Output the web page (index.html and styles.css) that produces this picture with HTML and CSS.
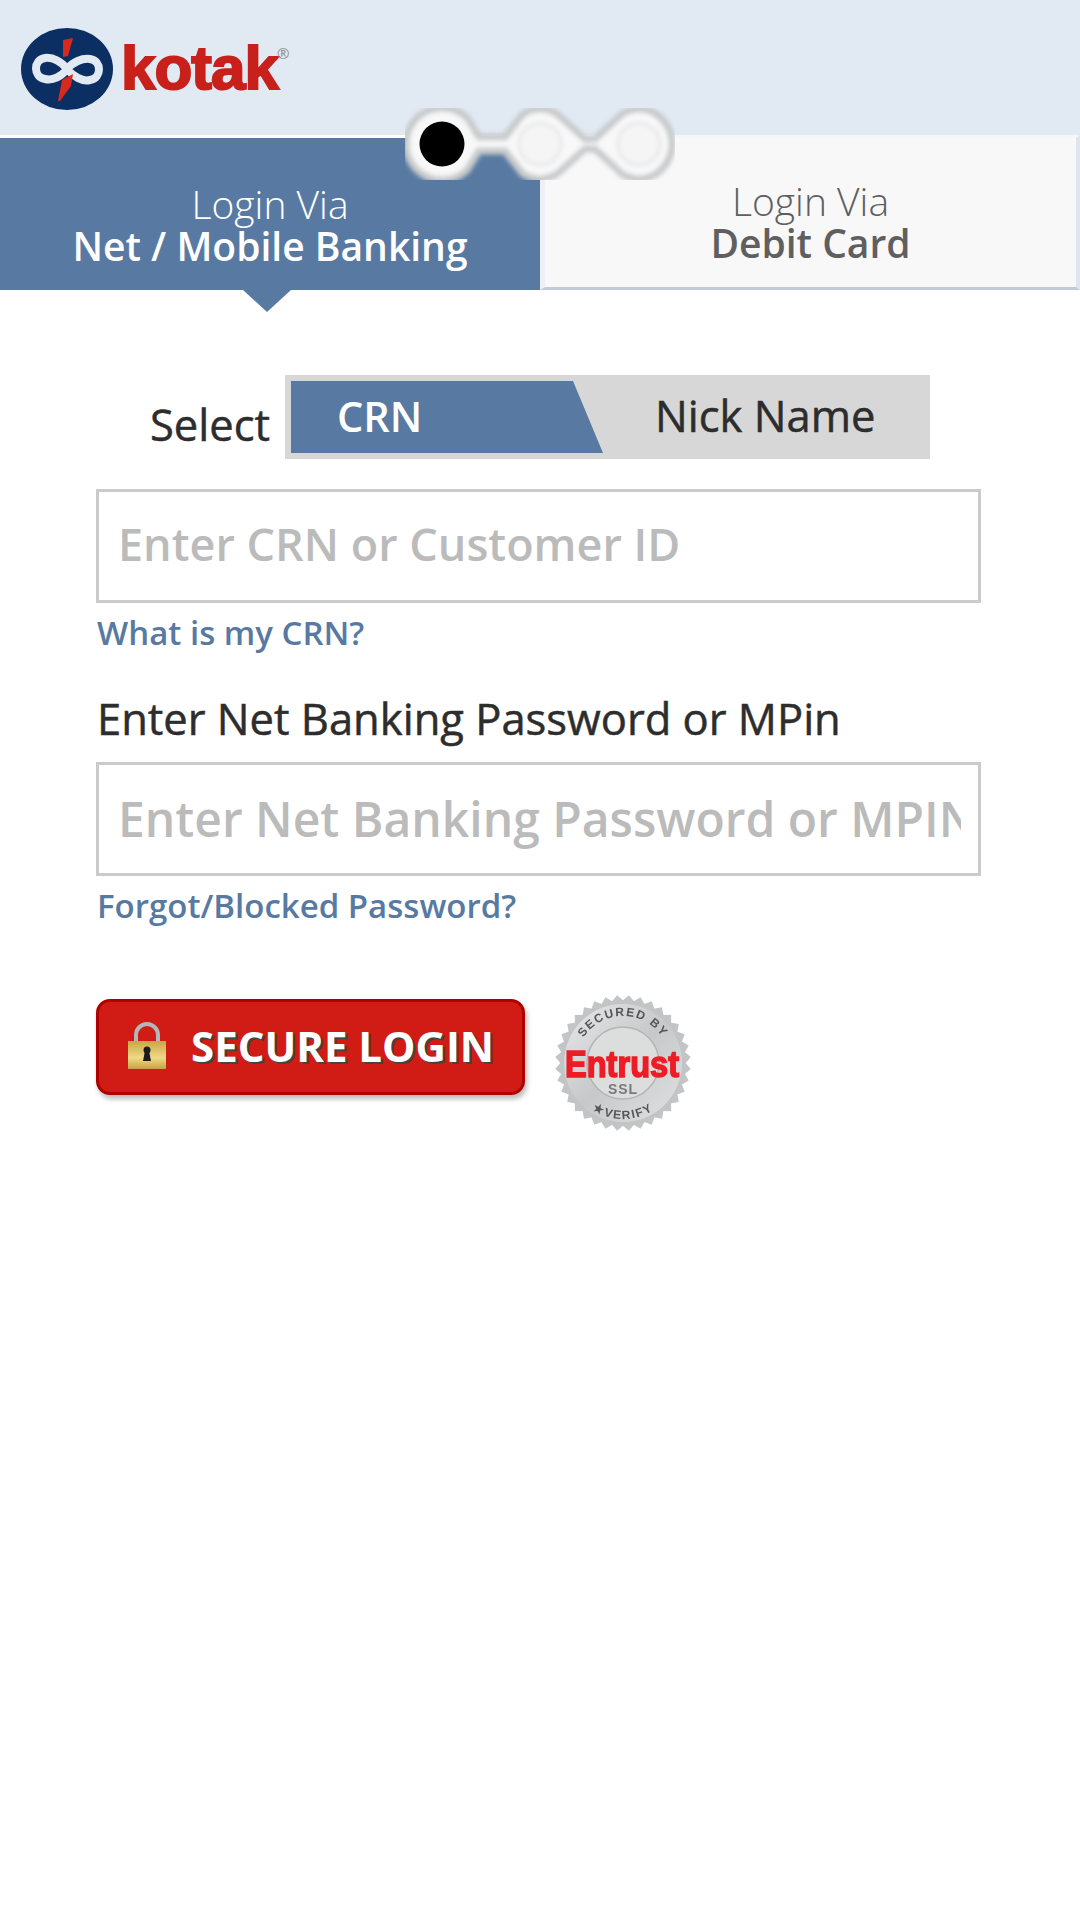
FILE: index.html
```html
<!DOCTYPE html>
<html lang="en">
<head>
    <meta charset="UTF-8">
    <meta name="viewport" content="width=device-width, initial-scale=1.0">
    <title>Kotak Login</title>
    <link rel="stylesheet" href="styles.css">
</head>
<body>
    <header class="top-bar">
        <div class="logo">
            <svg class="logo-mark" width="94" height="84" viewBox="0 0 94 84">
                <ellipse cx="47" cy="42" rx="46" ry="41" fill="#0b2e63"/>
                <path d="M47 42C42 35 33 30 25 31 13 33 13 50 25 52 33 54 42 49 47 42 53 35 62 31 70 32 82 34 82 51 70 53 62 55 53 49 47 42Z" fill="#0b2e63" stroke="#e1e9f3" stroke-width="8"/>
                <path d="M43 13l10-2-5 18-5 1z" fill="#d8291d"/>
                <path d="M42 53l11-6-2 12-11 15-2 0z" fill="#d8291d"/>
            </svg>
            <span class="logo-text">kotak</span>
            <span class="logo-reg">®</span>
        </div>
    </header>

    <div class="tabs">
        <div class="tab tab-active">
            <span class="tab-via">Login Via</span>
            <strong>Net / Mobile Banking</strong>
        </div>
        <div class="tab tab-other">
            <span class="tab-via">Login Via</span>
            <strong>Debit Card</strong>
        </div>
        <svg class="steps" width="270" height="72" viewBox="0 0 270 72">
            <defs>
                <filter id="soft" x="-10%" y="-10%" width="120%" height="120%">
                    <feGaussianBlur stdDeviation="2"/>
                </filter>
            </defs>
            <path d="M1 36A36 36 0 0 1 62 10L74 29H100L118 6Q135-4 152 6L180 31H190L217 6Q234-4 251 6A36 36 0 0 1 251 66Q234 76 217 66L190 41H180L152 66Q135 76 118 66L100 43H74L62 62A36 36 0 0 1 1 36Z" fill="#f8f8f8" stroke="#c8cacc" stroke-width="7" filter="url(#soft)"/>
            <circle cx="135" cy="36" r="21" fill="#f5f5f5" stroke="#e4e4e4" stroke-width="2.5" filter="url(#soft)"/>
            <circle cx="234" cy="36" r="21" fill="#f5f5f5" stroke="#e4e4e4" stroke-width="2.5" filter="url(#soft)"/>
            <circle cx="37" cy="36" r="22.5" fill="#000"/>
        </svg>
    </div>

    <main class="login-form">
        <div class="select-row">
            <span class="select-label">Select</span>
            <div class="toggle">
                <div class="toggle-on">CRN</div>
                <div class="toggle-off">Nick Name</div>
            </div>
        </div>

        <input class="field field-crn" type="text" placeholder="Enter CRN or Customer ID">
        <a class="help-link" href="#">What is my CRN?</a>

        <label class="field-label">Enter Net Banking Password or MPin</label>
        <input class="field field-pass" type="text" placeholder="Enter Net Banking Password or MPIN">
        <a class="help-link" href="#">Forgot/Blocked Password?</a>

        <div class="submit-row">
            <button class="login-btn" type="button">
                <svg width="40" height="48" viewBox="0 0 40 48">
                    <defs>
                        <linearGradient id="gold" x1="0" y1="0" x2="0" y2="1">
                            <stop offset="0" stop-color="#c9a544"/>
                            <stop offset="0.6" stop-color="#f0d987"/>
                            <stop offset="1" stop-color="#c79f45"/>
                        </linearGradient>
                    </defs>
                    <path d="M9 22V14a11 11 0 0 1 22 0v8" fill="none" stroke="#b4b6bd" stroke-width="4"/>
                    <rect x="1" y="20" width="38" height="28" fill="url(#gold)"/>
                    <circle cx="20" cy="29" r="3.5" fill="#1c1c1c"/>
                    <path d="M18 30h4l2 10h-8z" fill="#1c1c1c"/>
                </svg>
                <span>SECURE LOGIN</span>
            </button>
            <svg class="seal" width="136" height="136" viewBox="0 0 136 136">
                <defs>
                    <linearGradient id="silver" x1="0" y1="0" x2="1" y2="1">
                        <stop offset="0" stop-color="#e9e9e9"/>
                        <stop offset="0.5" stop-color="#c6c8ca"/>
                        <stop offset="1" stop-color="#e2e2e2"/>
                    </linearGradient>
                    <filter id="seal-soft" x="-5%" y="-5%" width="110%" height="110%">
                        <feGaussianBlur stdDeviation="0.6"/>
                    </filter>
                    <rect id="tooth" x="19.9" y="19.9" width="96.2" height="96.2" fill="#c2c4c6"/>
                    <path id="arc-top" d="M21 68a47 47 0 0 1 94 0"/>
                    <path id="arc-bottom" d="M12 68a56 56 0 0 0 112 0"/>
                </defs>
                <g filter="url(#seal-soft)">
                    <use href="#tooth"/>
                    <use href="#tooth" transform="rotate(10 68 68)"/>
                    <use href="#tooth" transform="rotate(20 68 68)"/>
                    <use href="#tooth" transform="rotate(30 68 68)"/>
                    <use href="#tooth" transform="rotate(40 68 68)"/>
                    <use href="#tooth" transform="rotate(50 68 68)"/>
                    <use href="#tooth" transform="rotate(60 68 68)"/>
                    <use href="#tooth" transform="rotate(70 68 68)"/>
                    <use href="#tooth" transform="rotate(80 68 68)"/>
                    <circle cx="68" cy="68" r="59" fill="url(#silver)"/>
                    <circle cx="68" cy="68" r="36" fill="#dcdddd" stroke="#b2b4b6" stroke-width="1.5"/>
                    <text class="seal-small"><textPath href="#arc-top" startOffset="50%" text-anchor="middle">SECURED BY</textPath></text>
                    <text class="seal-small"><textPath href="#arc-bottom" startOffset="50%" text-anchor="middle">★VERIFY</textPath></text>
                    <text class="seal-ssl" x="68" y="99" text-anchor="middle">SSL</text>
                    <text class="seal-brand" x="67" y="82" text-anchor="middle" textLength="114" lengthAdjust="spacingAndGlyphs">Entrust</text>
                </g>
            </svg>
        </div>
    </main>
</body>
</html>
```

FILE: styles.css
```css
html, body {
    margin: 0;
    padding: 0;
    background: #fff;
}
body {
    font-family: "Open Sans", sans-serif;
    color: #2d2d2d;
    min-height: 1920px;
}

.top-bar {
    height: 135px;
    background: #e1e9f3;
    box-sizing: border-box;
    padding: 27px 0 0 20px;
}
.logo {
    display: flex;
    align-items: flex-start;
}
.logo-mark {
    flex: none;
}
.logo-text {
    margin: 8px 0 0 7px;
    font-family: "Liberation Sans", sans-serif;
    font-weight: 700;
    font-size: 62px;
    line-height: 66px;
    letter-spacing: -1px;
    color: #c8201a;
    -webkit-text-stroke: 2px #c8201a;
}
.logo-reg {
    font-size: 15px;
    line-height: 16px;
    margin: 18px 0 0 -1px;
    color: #8d8d8d;
}

.tabs {
    position: relative;
    display: flex;
    height: 155px;
}
.tab {
    flex: 0 0 50%;
    display: flex;
    flex-direction: column;
    align-items: center;
    box-sizing: border-box;
    font-size: 39px;
    line-height: 42px;
}
.tab-via {
    font-weight: 300;
}
.tab strong {
    font-weight: 600;
}
.tab-active {
    position: relative;
    margin-top: 3px;
    padding-top: 45px;
    background: #587aa2;
    color: #fff;
}
.tab-active::after {
    content: "";
    position: absolute;
    left: 243px;
    top: 100%;
    border-left: 24px solid transparent;
    border-right: 24px solid transparent;
    border-top: 22px solid #587aa2;
}
.tab-other {
    padding-top: 42px;
    background: #f8f8f8;
    color: #5f5f5f;
    border-top: 3px solid #f3f6fa;
    border-left: 5px solid #edf1f5;
    border-right: 4px solid #dfe5ec;
    border-bottom: 3px solid #bfccd9;
}
.steps {
    position: absolute;
    left: 405px;
    top: -27px;
}

.login-form {
    padding: 85px 99px 0 96px;
    display: flex;
    flex-direction: column;
    align-items: flex-start;
}
.select-row {
    display: flex;
    align-items: flex-start;
    margin-left: 54px;
}
.select-label {
    width: 120px;
    font-size: 43.5px;
    line-height: 54px;
    margin: 23px 15px 0 0;
    white-space: nowrap;
    -webkit-text-stroke: 0.5px #2d2d2d;
}
.toggle {
    display: flex;
    width: 645px;
    height: 84px;
    box-sizing: border-box;
    padding: 6px;
    background: #d7d7d7;
    font-size: 43.5px;
}
.toggle-on {
    width: 312px;
    box-sizing: border-box;
    padding-left: 46px;
    font-size: 41.5px;
    font-weight: 600;
    line-height: 70px;
    background: #587aa2;
    color: #fff;
    clip-path: polygon(0 0, 282px 0, 100% 100%, 0 100%);
}
.toggle-off {
    margin-left: 52px;
    line-height: 70px;
    -webkit-text-stroke: 0.5px #2d2d2d;
}

.field {
    display: block;
    width: 885px;
    height: 114px;
    box-sizing: border-box;
    margin: 30px 0 0;
    padding: 0 17px 0 19px;
    border: 3px solid #cbcbcb;
    background: #fff;
    font-family: inherit;
    font-weight: 600;
    outline: none;
}
.field::placeholder {
    color: #bbb;
    opacity: 1;
}
.field-crn {
    font-size: 45px;
    padding-bottom: 6px;
}
.field-pass {
    font-size: 48px;
    padding-bottom: 2px;
}
.help-link {
    margin: 8px 0 0 1px;
    font-size: 33px;
    font-weight: 600;
    line-height: 44px;
    color: #587aa2;
    text-decoration: none;
}
.field-label {
    margin: 37px 0 0 1px;
    font-size: 43.5px;
    line-height: 54px;
    -webkit-text-stroke: 0.5px #2d2d2d;
}
.field-label + .field {
    margin-top: 16px;
}

.submit-row {
    display: flex;
    align-items: flex-start;
    margin-top: 67px;
}
.login-btn {
    display: flex;
    align-items: center;
    width: 429px;
    height: 96px;
    margin-top: 4px;
    box-sizing: border-box;
    padding: 0 0 4px 28px;
    border: 3px solid #b00000;
    border-radius: 14px;
    background: #d01c14;
    box-shadow: 2px 4px 5px #bbb;
    color: #fff;
    font-family: inherit;
    font-size: 42px;
    font-weight: 700;
    text-shadow: 2px 2px 0 #444;
}
.login-btn span {
    margin-left: 24px;
}
.seal {
    margin-left: 30px;
}
.seal-small {
    font-family: "Liberation Sans", sans-serif;
    font-size: 12px;
    font-weight: 700;
    letter-spacing: 1.5px;
    fill: #55575a;
}
.seal-ssl {
    font-family: "Liberation Sans", sans-serif;
    font-size: 14px;
    font-weight: 700;
    letter-spacing: 1px;
    fill: #77797b;
}
.seal-brand {
    font-family: "Liberation Sans", sans-serif;
    font-size: 37px;
    font-weight: 700;
    fill: #ee1c25;
    stroke: #ee1c25;
    stroke-width: 1.6px;
}
```
